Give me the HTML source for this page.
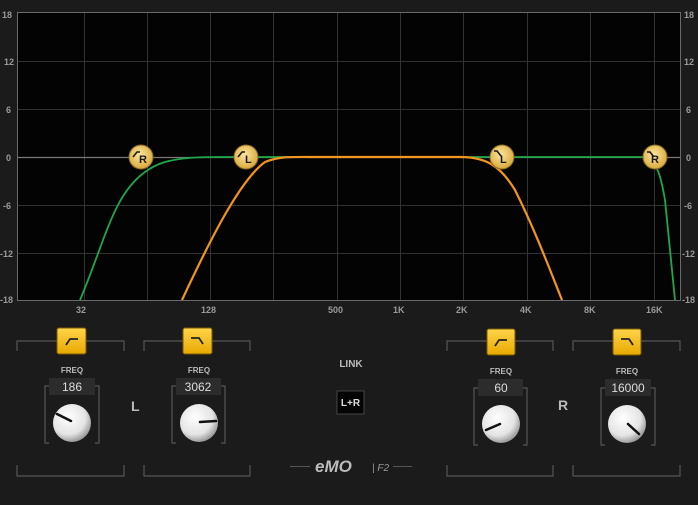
<!DOCTYPE html>
<html><head><style>
html,body{margin:0;padding:0;background:#1b1b1c;}
body{width:698px;height:500px;overflow:hidden;font-family:"Liberation Sans",sans-serif;}
</style></head><body>
<svg width="698" height="500" viewBox="0 0 698 500" xmlns="http://www.w3.org/2000/svg">
<defs>
<radialGradient id="kn" cx="0.4" cy="0.35" r="0.7"><stop offset="0" stop-color="#ffffff"/><stop offset="0.65" stop-color="#e4e4e4"/><stop offset="1" stop-color="#8a8a8a"/></radialGradient>
<linearGradient id="btn" x1="0" y1="0" x2="0" y2="1"><stop offset="0" stop-color="#ffd54a"/><stop offset="1" stop-color="#e8a800"/></linearGradient>
<radialGradient id="nd" cx="0.45" cy="0.4" r="0.6"><stop offset="0" stop-color="#fbe6a0"/><stop offset="1" stop-color="#d9a93a"/></radialGradient>
</defs>
<rect width="698" height="500" fill="#1b1b1c"/>
<rect x="17.5" y="12.5" width="663" height="288" fill="#030303" stroke="#6a6a6a"/>
<g stroke="#333" stroke-width="1">
<line x1="18" y1="61.5" x2="680" y2="61.5"/><line x1="18" y1="109.5" x2="680" y2="109.5"/>
<line x1="18" y1="205.5" x2="680" y2="205.5"/><line x1="18" y1="253.5" x2="680" y2="253.5"/>
<line x1="84.5" y1="13" x2="84.5" y2="300"/><line x1="147.5" y1="13" x2="147.5" y2="300"/>
<line x1="210.5" y1="13" x2="210.5" y2="300"/><line x1="273.5" y1="13" x2="273.5" y2="300"/>
<line x1="337.5" y1="13" x2="337.5" y2="300"/><line x1="400.5" y1="13" x2="400.5" y2="300"/>
<line x1="463.5" y1="13" x2="463.5" y2="300"/><line x1="527.5" y1="13" x2="527.5" y2="300"/>
<line x1="590.5" y1="13" x2="590.5" y2="300"/><line x1="654.5" y1="13" x2="654.5" y2="300"/>
</g>
<line x1="18" y1="157.5" x2="680" y2="157.5" stroke="#777" stroke-width="1.2"/>
<g font-size="9" fill="#9a9a9a" font-weight="bold">
<text x="2" y="18">18</text><text x="4" y="65">12</text><text x="6" y="113">6</text><text x="6" y="161">0</text><text x="3" y="209">-6</text><text x="0" y="257">-12</text><text x="0" y="303">-18</text>
<text x="684" y="18">18</text><text x="684" y="65">12</text><text x="686" y="113">6</text><text x="686" y="161">0</text><text x="684" y="209">-6</text><text x="682" y="257">-12</text><text x="682" y="303">-18</text>
<text x="76" y="313">32</text><text x="201" y="313">128</text><text x="328" y="313">500</text><text x="393" y="313">1K</text><text x="456" y="313">2K</text><text x="520" y="313">4K</text><text x="584" y="313">8K</text><text x="646" y="313">16K</text>
</g>
<path d="M80 300 C95 265 105 230 118 205 C130 182 145 168 165 162 C180 158 195 157 220 157 L640 157 C655 157 660 170 665 200 C668 230 672 270 675 300" fill="none" stroke="#1fa84a" stroke-width="1.8"/>
<path d="M182 300 C210 240 240 180 265 162 C280 156 290 157 320 157 L460 157 C485 157 500 165 515 190 C535 230 550 270 562 300" fill="none" stroke="#f2941d" stroke-width="2.2"/>
<g>
<circle cx="141" cy="157" r="12" fill="url(#nd)" stroke="#8a6a20"/><circle cx="246" cy="157" r="12" fill="url(#nd)" stroke="#8a6a20"/>
<circle cx="502" cy="157" r="12" fill="url(#nd)" stroke="#8a6a20"/><circle cx="655" cy="157" r="12" fill="url(#nd)" stroke="#8a6a20"/>
<g fill="none" stroke="#1a1a1a" stroke-width="1.6">
<path d="M133 157 L137 152 L140 152"/><path d="M238 157 L242 152 L245 152"/>
<path d="M494 151 L497 151 L501 156"/><path d="M647 152 L650 152 L654 157"/>
</g>
<g font-size="11" font-weight="bold" fill="#1a1a1a">
<text x="139" y="163">R</text><text x="245" y="163">L</text><text x="500" y="163">L</text><text x="651" y="163">R</text>
</g>
</g>
<g fill="none" stroke="#555" stroke-width="1.2">
<path d="M17 351 V341 H124 V351 M17 465 V476 H124 V465"/>
<path d="M144 351 V341 H250 V351 M144 465 V476 H250 V465"/>
<path d="M447 351 V341 H553 V351 M447 465 V476 H553 V465"/>
<path d="M573 351 V341 H680 V351 M573 465 V476 H680 V465"/>
<path d="M49 386 H45 V443 H49 M95 386 H99 V443 H95"/>
<path d="M176 386 H172 V443 H176 M221 386 H225 V443 H221"/>
<path d="M478 388 H474 V445 H478 M523 388 H527 V445 H523"/>
<path d="M605 388 H601 V445 H605 M651 388 H655 V445 H651"/>
</g>
<g>
<rect x="57" y="328" width="29" height="26" rx="2" fill="url(#btn)" stroke="#7a5a00"/>
<rect x="183" y="328" width="29" height="26" rx="2" fill="url(#btn)" stroke="#7a5a00"/>
<rect x="487" y="329" width="28" height="26" rx="2" fill="url(#btn)" stroke="#7a5a00"/>
<rect x="613" y="329" width="28" height="26" rx="2" fill="url(#btn)" stroke="#7a5a00"/>
<g fill="none" stroke="#222" stroke-width="1.8">
<path d="M66 345 L70 339 L78 339"/><path d="M191 338 L199 338 L203 344"/>
<path d="M495 346 L499 340 L507 340"/><path d="M621 339 L629 339 L633 345"/>
</g>
</g>
<g font-size="8" font-weight="bold" fill="#bbb" text-anchor="middle">
<text x="72" y="373">FREQ</text><text x="199" y="373">FREQ</text><text x="501" y="374">FREQ</text><text x="627" y="374">FREQ</text>
</g>
<g fill="#2c2c2c"><rect x="49" y="378" width="46" height="17"/><rect x="176" y="378" width="45" height="17"/><rect x="478" y="379" width="45" height="17"/><rect x="605" y="379" width="46" height="17"/></g>
<g font-size="12" fill="#ddd" text-anchor="middle">
<text x="72" y="391">186</text><text x="198" y="391">3062</text><text x="501" y="392">60</text><text x="628" y="392">16000</text>
</g>
<g>
<circle cx="72" cy="423" r="19" fill="url(#kn)"/><circle cx="199" cy="423" r="19" fill="url(#kn)"/>
<circle cx="501" cy="424" r="19" fill="url(#kn)"/><circle cx="627" cy="424" r="19" fill="url(#kn)"/>
<g stroke="#111" stroke-width="2.5" stroke-linecap="round">
<line x1="57" y1="414" x2="71" y2="421"/><line x1="200" y1="422" x2="216" y2="421"/>
<line x1="486" y1="430" x2="500" y2="424"/><line x1="628" y1="424" x2="639" y2="434"/>
</g>
</g>
<g font-size="14" font-weight="bold" fill="#bbb"><text x="131" y="411">L</text><text x="558" y="410">R</text></g>
<text x="351" y="367" font-size="10" font-weight="bold" fill="#bbb" text-anchor="middle">LINK</text>
<rect x="337" y="391" width="27" height="23" fill="#050505" stroke="#444"/>
<text x="350.5" y="406" font-size="10" font-weight="bold" fill="#ddd" text-anchor="middle">L+R</text>
<g stroke="#555"><line x1="290" y1="466.5" x2="310" y2="466.5"/><line x1="393" y1="466.5" x2="412" y2="466.5"/></g>
<text x="315" y="472" font-size="17" font-weight="bold" font-style="italic" fill="#bbb">eMO</text>
<text x="372" y="471" font-size="10" font-style="italic" fill="#999">| F2</text>
</svg>
</body></html>
